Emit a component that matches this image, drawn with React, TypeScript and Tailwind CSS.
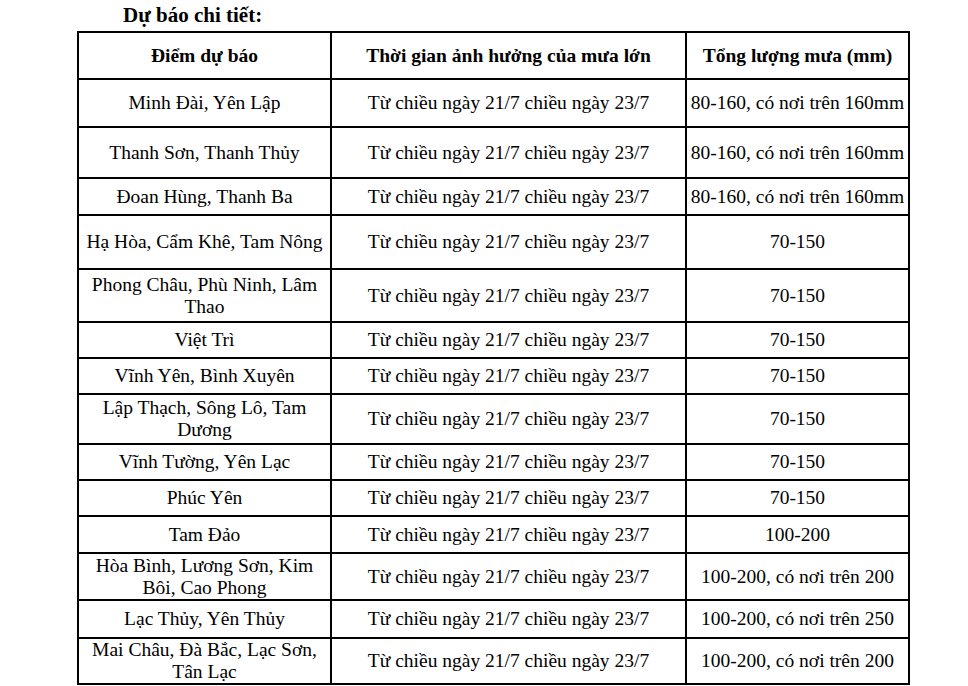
const rows: { place: string[]; amount: string; h: number }[] = [
  { place: ["Minh Đài, Yên Lập"], amount: "80-160, có nơi trên 160mm", h: 48 },
  { place: ["Thanh Sơn, Thanh Thủy"], amount: "80-160, có nơi trên 160mm", h: 51 },
  { place: ["Đoan Hùng, Thanh Ba"], amount: "80-160, có nơi trên 160mm", h: 37 },
  { place: ["Hạ Hòa, Cẩm Khê, Tam Nông"], amount: "70-150", h: 54 },
  { place: ["Phong Châu, Phù Ninh, Lâm", "Thao"], amount: "70-150", h: 53 },
  { place: ["Việt Trì"], amount: "70-150", h: 36 },
  { place: ["Vĩnh Yên, Bình Xuyên"], amount: "70-150", h: 36 },
  { place: ["Lập Thạch, Sông Lô, Tam", "Dương"], amount: "70-150", h: 50 },
  { place: ["Vĩnh Tường, Yên Lạc"], amount: "70-150", h: 36 },
  { place: ["Phúc Yên"], amount: "70-150", h: 36 },
  { place: ["Tam Đảo"], amount: "100-200", h: 37 },
  { place: ["Hòa Bình, Lương Sơn, Kim", "Bôi, Cao Phong"], amount: "100-200, có nơi trên 200", h: 47 },
  { place: ["Lạc Thủy, Yên Thủy"], amount: "100-200, có nơi trên 250", h: 38 },
  { place: ["Mai Châu, Đà Bắc, Lạc Sơn,", "Tân Lạc"], amount: "100-200, có nơi trên 200", h: 46 },
];

export default function App() {
  return (
    <div
      className="w-[968px] h-[686px] bg-white text-black overflow-hidden"
      style={{ fontFamily: '"Liberation Serif", "Times New Roman", serif' }}
    >
      <div className="h-[31px] pl-[123px] pt-[3px] text-[21px] font-bold leading-[24px]">Dự báo chi tiết:</div>
      <table className="ml-[77px] border-collapse table-fixed w-[831px] text-[19.5px] leading-[22px]">
        <colgroup>
          <col className="w-[253px]" />
          <col className="w-[355px]" />
          <col className="w-[223px]" />
        </colgroup>
        <thead>
          <tr className="h-[47px] font-bold">
            <th className="border-2 border-black text-center p-0">Điểm dự báo</th>
            <th className="border-2 border-black text-center p-0">Thời gian ảnh hưởng của mưa lớn</th>
            <th className="border-2 border-black text-center p-0">Tổng lượng mưa (mm)</th>
          </tr>
        </thead>
        <tbody>
          {rows.map((r, i) => (
            <tr key={i} style={{ height: r.h }}>
              <td className="border-2 border-black text-center p-0 whitespace-nowrap">
                {r.place.map((p, j) => (
                  <div key={j}>{p}</div>
                ))}
              </td>
              <td className="border-2 border-black text-center p-0 whitespace-nowrap">Từ chiều ngày 21/7 chiều ngày 23/7</td>
              <td className="border-2 border-black text-center p-0 whitespace-nowrap">{r.amount}</td>
            </tr>
          ))}
        </tbody>
      </table>
    </div>
  );
}
